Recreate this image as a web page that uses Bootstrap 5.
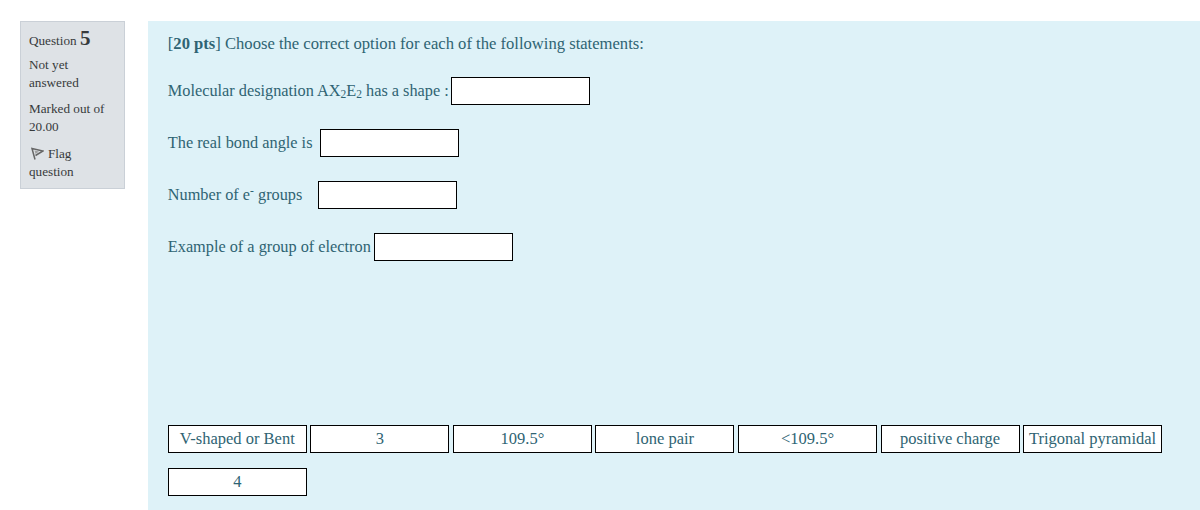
<!DOCTYPE html>
<html lang="en">
<head>
    <meta charset="UTF-8">
    <meta name="viewport" content="width=device-width, initial-scale=1.0">
    <title>Question 5</title>
    <link href="https://cdn.jsdelivr.net/npm/bootstrap@5.3.3/dist/css/bootstrap.min.css" rel="stylesheet">
    <style>
        body { font-family: "Liberation Serif", serif; font-size: 16.5px; color: #373a3c; background: #fff; }
        .que-wrap { padding: 21px 0 0 20px; height: 510px; overflow: hidden; }
        .que-info { width: 105px; height: 168px; flex: none; background: #dee2e6; border: 1px solid #cad0d7; padding: 7px 8px; font-size: 13.2px; line-height: 18px; }
        .que-info p { margin: 0 0 8px; }
        .que-info p.que-title { margin-bottom: 6px; }
        .que-info p.que-mark { margin-bottom: 9px; }
        .que-no { font-size: 21px; font-weight: 700; line-height: 18px; }
        .flag-icon { margin: 0 4px 0 2px; vertical-align: -2px; }
        .que-body { margin-left: 23px; flex: 1; background: #def2f8; color: #2f6473; padding: 13px 0 0 19.8px; height: 489px; }
        .intro { font-size: 16.6px; line-height: 20px; margin-bottom: 23px; }
        .drop-row { height: 28px; margin-bottom: 24px; font-size: 16.3px; white-space: nowrap; }
        .lbl-1 { width: 283.2px; }
        .lbl-2 { width: 152.2px; }
        .lbl-3 { width: 150.2px; }
        .lbl-4 { width: 206.2px; }
        .drop-box { width: 139px; height: 28px; background: #fff; border: 1px solid #000; flex: none; }
        .drag-list { margin-top: 164px; column-gap: 3.55px; row-gap: 15px; }
        .drag-item { width: 139px; height: 28px; background: #fff; border: 1px solid #000; text-align: center; line-height: 25px; white-space: nowrap; }
        sub { font-size: 11.5px; bottom: -.2em; }
        sup { font-size: 11.5px; }
    </style>
</head>
<body>
    <div class="que-wrap d-flex align-items-start">
        <div class="que-info">
            <p class="que-title">Question <span class="que-no">5</span></p>
            <p>Not yet answered</p>
            <p class="que-mark">Marked out of 20.00</p>
            <div>
                <svg class="flag-icon" width="13" height="13" viewBox="0 0 13 13" aria-hidden="true">
                    <path d="M4 12.5 1 1.5 12 4 4.5 8.5" fill="none" stroke="#666" stroke-width="1.5"/>
                    <path d="M3.5 3.5 4.6 7 8 4.6Z" fill="#a0a0a0"/>
                </svg>Flag question
            </div>
        </div>
        <div class="que-body">
            <p class="intro">[<b>20 pts</b>] Choose the correct option for each of the following statements:</p>
            <div class="drop-row d-flex align-items-center">
                <span class="lbl-1">Molecular designation AX<sub>2</sub>E<sub>2</sub> has a shape :</span>
                <span class="drop-box"></span>
            </div>
            <div class="drop-row d-flex align-items-center">
                <span class="lbl-2">The real bond angle is</span>
                <span class="drop-box"></span>
            </div>
            <div class="drop-row d-flex align-items-center">
                <span class="lbl-3">Number of e<sup>-</sup> groups</span>
                <span class="drop-box"></span>
            </div>
            <div class="drop-row d-flex align-items-center">
                <span class="lbl-4">Example of a group of electron</span>
                <span class="drop-box"></span>
            </div>
            <div class="drag-list d-flex flex-wrap">
                <div class="drag-item">V-shaped or Bent</div>
                <div class="drag-item">3</div>
                <div class="drag-item">109.5°</div>
                <div class="drag-item">lone pair</div>
                <div class="drag-item">&lt;109.5°</div>
                <div class="drag-item">positive charge</div>
                <div class="drag-item">Trigonal pyramidal</div>
                <div class="drag-item">4</div>
            </div>
        </div>
    </div>
    <script src="https://cdn.jsdelivr.net/npm/bootstrap@5.3.3/dist/js/bootstrap.bundle.min.js"></script>
</body>
</html>
